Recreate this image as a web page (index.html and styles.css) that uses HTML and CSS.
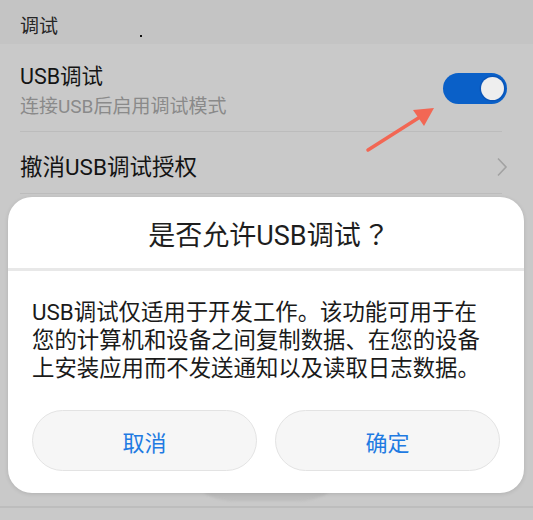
FILE: index.html
```html
<!DOCTYPE html>
<html lang="zh-CN">
<head>
<meta charset="utf-8">
<title>调试</title>
<link rel="stylesheet" href="styles.css">
</head>
<body>
<div class="screen">
  <div class="section-header">
    <span class="section-title">调试</span>
    <span class="speck"></span>
  </div>

  <div class="row row-switch">
    <div class="row-text">
      <div class="row-title">USB调试</div>
      <div class="row-sub">连接USB后启用调试模式</div>
    </div>
    <div class="switch on"><span class="knob"></span></div>
  </div>

  <div class="row row-link">
    <div class="row-title">撤消USB调试授权</div>
    <svg class="chevron" viewBox="0 0 12 20" width="12" height="20">
      <path d="M2 1.5 L10 10 L2 18.5" fill="none" stroke="#a2a2a2" stroke-width="1.6"/>
    </svg>
  </div>

  <div class="row row-hidden"></div>

  <svg class="pointer" viewBox="0 0 80 50" width="80" height="50">
    <line x1="4" y1="46" x2="56" y2="13" stroke="#f26754" stroke-width="3.5" stroke-linecap="round"/>
    <polygon points="70,4 49,6 60,22" fill="#f26754"/>
  </svg>

  <div class="dialog-shade"></div>

  <div class="dialog">
    <div class="dialog-head">是否允许USB调试<span class="cjk-punct">？</span></div>
    <div class="dialog-body">
      <p class="dialog-text">USB调试仅适用于开发工作。该功能可用于在<br>您的计算机和设备之间复制数据、在您的设备<br>上安装应用而不发送通知以及读取日志数据。</p>
      <div class="dialog-actions">
        <button class="pill">取消</button>
        <button class="pill">确定</button>
      </div>
    </div>
  </div>
</div>
</body>
</html>
```

FILE: styles.css
```css
* { box-sizing: border-box; }

html, body {
  margin: 0;
  padding: 0;
}

body {
  width: 533px;
  height: 520px;
  overflow: hidden;
  background: #c9c9c9;
  font-family: Roboto, "Noto Sans CJK SC", sans-serif;
  color: #1b1b1b;
}

.screen {
  position: relative;
  width: 533px;
  height: 520px;
}

/* group header */
.section-header {
  height: 44px;
  background: #c4c4c4;
  padding: 14px 20px 0;
  display: flex;
  align-items: flex-start;
}

.section-title {
  font-size: 19px;
  line-height: 26px;
  color: #262626;
}

.speck {
  width: 2px;
  height: 2px;
  background: #111;
  margin: 21px 0 0 82px;
}

/* list rows */
.row {
  margin: 0 31px 0 20px;
  display: flex;
  align-items: center;
  border-bottom: 1px solid #bcbcbc;
}

.row-switch {
  height: 88px;
  justify-content: space-between;
}

.row-text {
  display: flex;
  flex-direction: column;
  gap: 4px;
  padding-top: 6px;
}

.row-title {
  font-size: 21.5px;
  line-height: 28px;
  color: #141414;
}

.row-sub {
  font-size: 19px;
  line-height: 24px;
  color: #8a8a8a;
}

.switch {
  width: 64px;
  height: 31px;
  border-radius: 16px;
  background: #0a60c8;
  position: relative;
  margin-right: -5px;
  margin-top: 2px;
}

.switch .knob {
  position: absolute;
  right: 3px;
  top: 4px;
  width: 23px;
  height: 23px;
  border-radius: 50%;
  background: #eeeeee;
  box-shadow: 0 0 0 1.5px #0a55b8;
}

.row-link {
  height: 62px;
  justify-content: space-between;
  padding-top: 8px;
}

.row-link .row-title {
  font-size: 22.5px;
}

.chevron {
  margin-right: -6px;
  margin-top: 0;
}

.row-hidden {
  height: 314px;
  margin: 0;
  border-bottom: 2px solid #bdbdbd;
}

/* annotation arrow */
.pointer {
  position: absolute;
  left: 364px;
  top: 104px;
}

/* dialog */
.dialog-shade {
  position: absolute;
  left: 196px;
  top: 480px;
  width: 140px;
  height: 21px;
  border-radius: 0 0 40px 40px / 0 0 20px 20px;
  background: #bdbdbd;
  filter: blur(1px);
}

.dialog {
  position: absolute;
  left: 8px;
  top: 197px;
  width: 516px;
  height: 296px;
  background: #ffffff;
  border-radius: 24px;
  box-shadow: 0 1px 4px rgba(0, 0, 0, 0.12);
  overflow: hidden;
}

.dialog-head {
  height: 74px;
  border-bottom: 3px solid #e8e8e8;
  display: flex;
  align-items: center;
  justify-content: center;
  font-size: 27px;
  color: #1e1e1e;
  padding: 1px 0 0 6px;
}

.cjk-punct {
  font-family: "Noto Sans CJK JP", "Noto Sans CJK SC", sans-serif;
  margin-left: 2px;
}

.dialog-body {
  padding: 27px 24px 0;
}

.dialog-text {
  margin: 0;
  font-size: 22.4px;
  line-height: 28px;
  color: #1a1a1a;
  white-space: nowrap;
}

.dialog-actions {
  display: flex;
  gap: 18px;
  margin-top: 28px;
}

.pill {
  flex: 1;
  height: 61px;
  border: 1px solid #e3e3e3;
  border-radius: 31px;
  background: #f6f6f6;
  font-family: Roboto, "Noto Sans CJK SC", sans-serif;
  font-size: 22px;
  color: #1f7be2;
  padding: 0;
}
```
